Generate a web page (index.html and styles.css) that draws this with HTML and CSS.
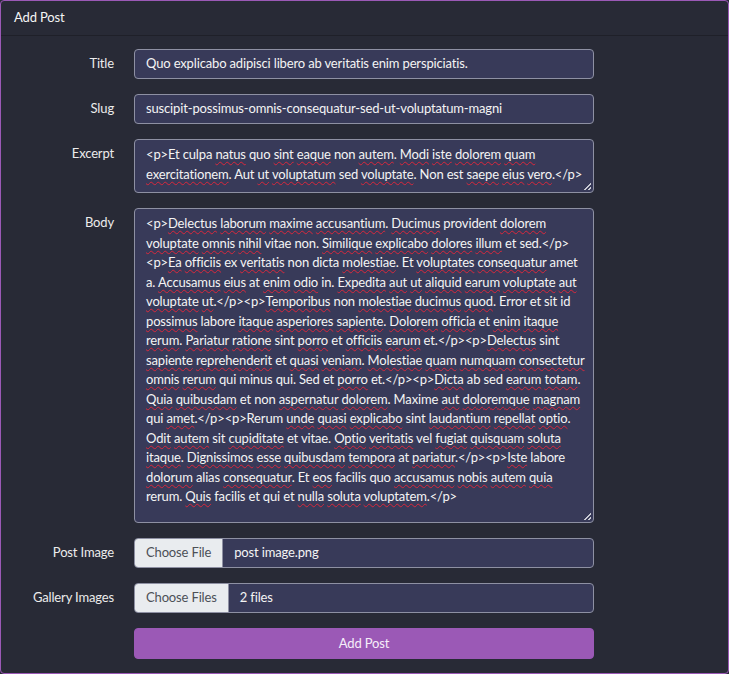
FILE: index.html
```html
<!DOCTYPE html>
<html lang="en">
<head>
<meta charset="utf-8">
<title>Add Post</title>
<link rel="stylesheet" href="styles.css">
</head>
<body>
<div class="card">
  <div class="card-header">Add Post</div>
  <form class="card-body">
    <div class="row">
      <label class="lbl">Title</label>
      <div class="field">Quo explicabo adipisci libero ab veritatis enim perspiciatis.</div>
    </div>
    <div class="row">
      <label class="lbl">Slug</label>
      <div class="field">suscipit-possimus-omnis-consequatur-sed-ut-voluptatum-magni</div>
    </div>
    <div class="row">
      <label class="lbl">Excerpt</label>
      <div class="field area excerpt">&lt;p&gt;Et culpa <span class="sp">natus</span> quo <span class="sp">sint</span> <span class="sp">eaque</span> non <span class="sp">autem</span>. <span class="sp">Modi</span> <span class="sp">iste</span> <span class="sp">dolorem</span> <span class="sp">quam</span><br><span class="sp">exercitationem</span>. Aut <span class="sp">ut</span> <span class="sp">voluptatum</span> sed <span class="sp">voluptate</span>. Non est <span class="sp">saepe</span> <span class="sp">eius</span> <span class="sp">vero</span>.&lt;/p&gt;<span class="grip"></span></div>
    </div>
    <div class="row">
      <label class="lbl">Body</label>
      <div class="field area bodytext">&lt;p&gt;<span class="sp">Delectus</span> <span class="sp">laborum</span> <span class="sp">maxime</span> <span class="sp">accusantium</span>. <span class="sp">Ducimus</span> provident <span class="sp">dolorem</span><br><span class="sp">voluptate</span> <span class="sp">omnis</span> <span class="sp">nihil</span> vitae non. <span class="sp">Similique</span> <span class="sp">explicabo</span> <span class="sp">dolores</span> <span class="sp">illum</span> et sed.&lt;/p&gt;<br>&lt;p&gt;<span class="sp">Ea</span> <span class="sp">officiis</span> ex <span class="sp">veritatis</span> non dicta <span class="sp">molestiae</span>. Et <span class="sp">voluptates</span> <span class="sp">consequatur</span> amet<br>a. <span class="sp">Accusamus</span> <span class="sp">eius</span> at <span class="sp">enim</span> <span class="sp">odio</span> in. <span class="sp">Expedita</span> <span class="sp">aut</span> <span class="sp">ut</span> <span class="sp">aliquid</span> <span class="sp">earum</span> <span class="sp">voluptate</span> <span class="sp">aut</span><br><span class="sp">voluptate</span> <span class="sp">ut</span>.&lt;/p&gt;&lt;p&gt;<span class="sp">Temporibus</span> non <span class="sp">molestiae</span> <span class="sp">ducimus</span> <span class="sp">quod</span>. Error et sit id<br><span class="sp">possimus</span> labore <span class="sp">itaque</span> <span class="sp">asperiores</span> <span class="sp">sapiente</span>. <span class="sp">Dolorem</span> <span class="sp">officia</span> et <span class="sp">enim</span> <span class="sp">itaque</span><br><span class="sp">rerum</span>. <span class="sp">Pariatur</span> <span class="sp">ratione</span> sint <span class="sp">porro</span> et <span class="sp">officiis</span> <span class="sp">earum</span> et.&lt;/p&gt;&lt;p&gt;<span class="sp">Delectus</span> sint<br><span class="sp">sapiente</span> <span class="sp">reprehenderit</span> et <span class="sp">quasi</span> <span class="sp">veniam</span>. <span class="sp">Molestiae</span> <span class="sp">quam</span> <span class="sp">numquam</span> <span class="sp">consectetur</span><br><span class="sp">omnis</span> <span class="sp">rerum</span> qui minus qui. Sed et <span class="sp">porro</span> et.&lt;/p&gt;&lt;p&gt;<span class="sp">Dicta</span> ab sed <span class="sp">earum</span> <span class="sp">totam</span>.<br><span class="sp">Quia</span> <span class="sp">quibusdam</span> et non <span class="sp">aspernatur</span> <span class="sp">dolorem</span>. Maxime <span class="sp">aut</span> <span class="sp">doloremque</span> <span class="sp">magnam</span><br>qui <span class="sp">amet</span>.&lt;/p&gt;&lt;p&gt;Rerum <span class="sp">unde</span> <span class="sp">quasi</span> <span class="sp">explicabo</span> sint <span class="sp">laudantium</span> <span class="sp">repellat</span> <span class="sp">optio</span>.<br><span class="sp">Odit</span> <span class="sp">autem</span> sit <span class="sp">cupiditate</span> et vitae. <span class="sp">Optio</span> <span class="sp">veritatis</span> vel <span class="sp">fugiat</span> <span class="sp">quisquam</span> <span class="sp">soluta</span><br><span class="sp">itaque</span>. <span class="sp">Dignissimos</span> <span class="sp">esse</span> <span class="sp">quibusdam</span> <span class="sp">tempora</span> at <span class="sp">pariatur</span>.&lt;/p&gt;&lt;p&gt;<span class="sp">Iste</span> labore<br><span class="sp">dolorum</span> alias <span class="sp">consequatur</span>. Et <span class="sp">eos</span> facilis quo <span class="sp">accusamus</span> <span class="sp">nobis</span> <span class="sp">autem</span> <span class="sp">quia</span><br>rerum. <span class="sp">Quis</span> facilis et qui et <span class="sp">nulla</span> <span class="sp">soluta</span> <span class="sp">voluptatem</span>.&lt;/p&gt;<span class="grip"></span></div>
    </div>
    <div class="row">
      <label class="lbl">Post Image</label>
      <div class="field file"><span class="file-btn">Choose File</span><span class="file-name">post image.png</span></div>
    </div>
    <div class="row">
      <label class="lbl">Gallery Images</label>
      <div class="field file"><span class="file-btn">Choose Files</span><span class="file-name">2 files</span></div>
    </div>
    <div class="row">
      <span></span>
      <button type="button" class="submit">Add Post</button>
    </div>
  </form>
</div>
</body>
</html>
```

FILE: styles.css
```css
* { box-sizing: border-box; }
html, body {
  margin: 0;
  background: #282a36;
}
body {
  font-family: "Lato", "Noto Sans", sans-serif;
  font-size: 13px;
  line-height: 19.5px;
  letter-spacing: -0.15px;
  color: #f3f3f3;
}
.card {
  width: 729px;
  height: 674px;
  border: 1px solid #9b59b6;
  border-radius: 4px;
  background: #282a36;
  overflow: hidden;
}
.card-header {
  height: 35px;
  padding: 7px 13px;
  border-bottom: 1px solid #1f2029;
  color: #f5f5f5;
}
.card-body {
  padding: 13px 12px 13px 13px;
  display: flex;
  flex-direction: column;
  gap: 15px;
  margin: 0;
}
.row {
  display: grid;
  grid-template-columns: 100px 460px;
  column-gap: 20px;
  align-items: start;
}
.lbl {
  text-align: right;
  padding-top: 5px;
  color: #ececec;
  white-space: nowrap;
}
.field {
  background: #383a59;
  border: 1px solid #8e90a3;
  border-radius: 4px;
  padding: 4px 11px;
  height: 30px;
  color: #f4f4f4;
  white-space: nowrap;
  overflow: hidden;
}
.area {
  position: relative;
  padding-top: 5px;
}
.excerpt { height: 54px; }
.bodytext { height: 315px; }
.sp {
  text-decoration: underline wavy #d9283c;
  text-decoration-thickness: 1px;
  text-underline-offset: 2px;
  text-decoration-skip-ink: none;
}
.grip {
  position: absolute;
  right: 2px;
  bottom: 2px;
  width: 7px;
  height: 7px;
  background:
    linear-gradient(135deg, transparent 45%, #c9cad4 45%, #c9cad4 58%, transparent 58%, transparent 75%, #c9cad4 75%, #c9cad4 88%, transparent 88%);
}
.file {
  display: flex;
  padding: 0;
}
.file-btn {
  background: #e9ecef;
  color: #4c5057;
  padding: 4px 11px;
  border-right: 1px solid #8e90a3;
}
.file-name {
  padding: 4px 11px;
}
.submit {
  height: 31px;
  border: 1px solid #9b59b6;
  border-radius: 4px;
  background: #9b59b6;
  color: #f6eefa;
  font-family: inherit;
  font-size: 13px;
  letter-spacing: -0.15px;
  line-height: 19.5px;
  padding: 5px 12px;
  cursor: pointer;
}
```
